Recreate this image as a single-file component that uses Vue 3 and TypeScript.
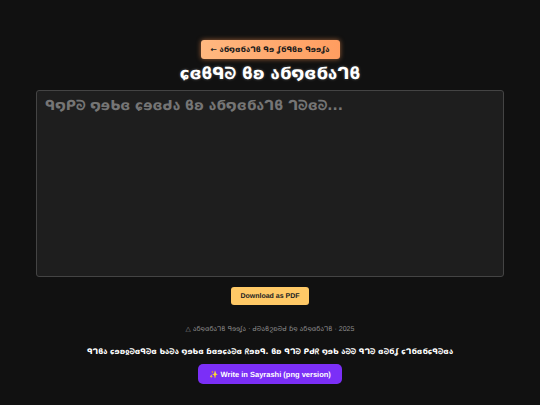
<script setup lang="ts">
// The reference text is set in a custom "Sayrashi" constructed-script font that is
// not installed here. Curly Unicode letters stand in for it as the nearest shapes:
// the English source below is passed through a letter-by-letter substitution.
const glyphs: Record<string, string> = {
  a: 'ϭ', b: 'ɓ', c: 'ɕ', d: 'ᑯ', e: 'ᘐ', f: 'ᖇ', g: 'ϩ', h: 'ᒉ', i: 'ϐ',
  k: 'ᖆ', l: 'ʆ', m: 'ꝯ', n: 'ʚ', o: 'ɘ', p: 'ᑭ', r: 'ɞ', s: 'ა', t: 'ᑫ',
  u: 'ᑲ', v: 'ჲ', w: 'ɕ', x: 'ᕦ', y: '໑', z: 'ʓ'
}
const sx = (text: string): string =>
  text
    .toLowerCase()
    .split('')
    .map((ch) => glyphs[ch] ?? ch)
    .join('')

const backLabel = '← ' + sx('Sayrashi to Latin tools')
const title = sx('Write in Sayrashi')
const placeholder = sx('Type your words in Sayrashi here') + '...'
const credit = sx('Sayrashi tools · designed by sayrashi')
const note = sx('This converter uses your browser font. In the pdf you see the real characters')
</script>

<template>
  <main class="page">
    <button class="back" type="button">{{ backLabel }}</button>
    <h1 class="title">{{ title }}</h1>
    <textarea class="editor" :placeholder="placeholder"></textarea>
    <button class="pdf" type="button">Download as PDF</button>
    <p class="credit">△ {{ credit }} <span class="year">· 2025</span></p>
    <p class="note">{{ note }}</p>
    <button class="png" type="button">✨ Write in Sayrashi (png version)</button>
  </main>
</template>

<style>
html,
body {
  margin: 0;
  background: #111111;
}
</style>

<style scoped>
.page {
  box-sizing: border-box;
  width: 540px;
  height: 405px;
  padding: 40px 36px 0;
  display: flex;
  flex-direction: column;
  align-items: center;
  background: #111111;
  font-family: "DejaVu Sans", "Liberation Sans", sans-serif;
  color: #ffffff;
  overflow: hidden;
  text-rendering: geometricPrecision;
}
button {
  border: none;
  cursor: pointer;
  text-rendering: geometricPrecision;
}
.back {
  width: 139px;
  height: 19px;
  padding: 0;
  border-radius: 3px;
  background: linear-gradient(90deg, #ffb880, #ff9d60);
  box-shadow: 0 0 5px rgba(255, 150, 80, 0.6);
  color: #1a1a1a;
  font-family: inherit;
  font-size: 7.6px;
  font-weight: 700;
  white-space: nowrap;
}
.title {
  margin: 5px 0 0;
  height: 20px;
  line-height: 20px;
  font-size: 16.5px;
  font-weight: 700;
  text-shadow: 0 0 3px rgba(255, 255, 255, 0.3);
  white-space: nowrap;
}
.editor {
  box-sizing: border-box;
  width: 468px;
  height: 187px;
  margin-top: 6px;
  padding: 7px 8px;
  background: #1e1e1e;
  border: 1px solid #444444;
  border-radius: 3px;
  color: #ffffff;
  font-family: inherit;
  font-size: 13.7px;
  font-weight: 700;
  resize: none;
  outline: none;
  display: block;
  text-rendering: geometricPrecision;
}
.editor::placeholder {
  color: #757575;
  opacity: 1;
}
.pdf {
  width: 78px;
  height: 18px;
  margin-top: 10px;
  padding: 0;
  background: #ffc966;
  border-radius: 3px;
  color: #222222;
  font-family: "Liberation Sans", sans-serif;
  font-size: 7px;
  font-weight: 700;
}
.credit {
  margin: 20px 0 0;
  height: 9px;
  line-height: 9px;
  font-size: 6.8px;
  color: #8a8a8a;
  white-space: nowrap;
}
.year {
  font-family: "Liberation Sans", sans-serif;
  font-size: 7px;
}
.note {
  margin: 13px 0 0;
  height: 10px;
  line-height: 10px;
  font-size: 7.6px;
  font-weight: 700;
  color: #ffffff;
  white-space: nowrap;
}
.png {
  width: 144px;
  height: 20px;
  margin-top: 7px;
  padding: 0;
  background: #7b2ff7;
  border-radius: 5px;
  color: #ffffff;
  font-family: "Liberation Sans", sans-serif;
  font-size: 7.5px;
  font-weight: 700;
  white-space: nowrap;
}
</style>
